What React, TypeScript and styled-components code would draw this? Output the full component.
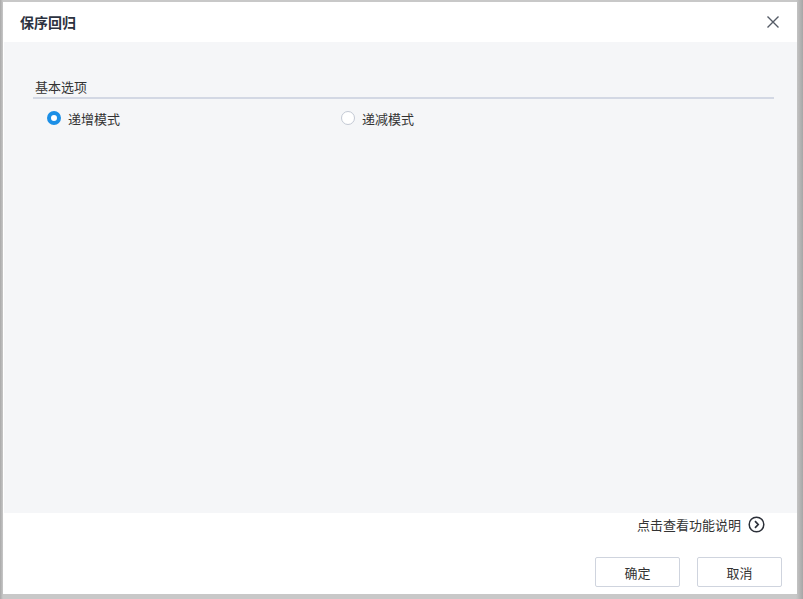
import React, { useState } from "react";
import styled, { createGlobalStyle } from "styled-components";

const GlobalStyle = createGlobalStyle`
  html, body {
    margin: 0;
    padding: 0;
    background: #b9b9b9;
  }
  body {
    font-family: "Noto Sans CJK SC", "Noto Sans", sans-serif;
  }
`;

const Page = styled.div`
  width: 803px;
  height: 599px;
  box-sizing: border-box;
  padding: 2px 6px 5px 3px;
  background: linear-gradient(90deg, #a9a9a9 0, #c8c8c8 3px, #c8c8c8 796px, #a6a6a6 803px);
`;

const Dialog = styled.div`
  width: 794px;
  height: 592px;
  background: #ffffff;
  display: flex;
  flex-direction: column;
`;

const Header = styled.div`
  height: 40px;
  display: flex;
  align-items: center;
  justify-content: space-between;
  padding: 0 17px 0 17px;
  flex-shrink: 0;
`;

const Title = styled.div`
  font-size: 14px;
  font-weight: 700;
  color: #2c3240;
`;

const CloseButton = styled.button`
  border: none;
  background: none;
  padding: 0;
  width: 14px;
  height: 14px;
  display: flex;
  cursor: pointer;
`;

const Body = styled.div`
  flex: 1;
  background: #f5f6f8;
  padding: 37px 23px 0 29px;
  margin-left: 1px;
`;

const SectionTitle = styled.div`
  font-size: 13px;
  color: #333;
  line-height: 16px;
  padding: 0 2px 2px;
  border-bottom: 2px solid #d3d8e4;
`;

const RadioRow = styled.div`
  display: flex;
  padding: 9px 0 0 14px;
`;

const RadioLabel = styled.label<{ $width?: number }>`
  display: flex;
  align-items: center;
  gap: 7px;
  width: ${(p) => (p.$width ? p.$width + "px" : "auto")};
  font-size: 13px;
  color: #333;
  height: 20px;
  cursor: pointer;
`;

const RadioDot = styled.span<{ $checked: boolean }>`
  width: 14px;
  height: 14px;
  border-radius: 50%;
  box-sizing: border-box;
  background: #fff;
  border: ${(p) => (p.$checked ? "4px solid #1c8fe6" : "1px solid #c3c9d4")};
`;

const Footer = styled.div`
  height: 81px;
  flex-shrink: 0;
  display: flex;
  flex-direction: column;
  align-items: flex-end;
  padding-right: 15px;
`;

const HelpLink = styled.a`
  display: flex;
  align-items: center;
  gap: 7px;
  margin-top: 2px;
  margin-right: 17px;
  font-size: 13px;
  color: #333;
  text-decoration: none;
  cursor: pointer;
`;

const Buttons = styled.div`
  display: flex;
  gap: 17px;
  margin-top: 23px;
`;

const Button = styled.button`
  width: 85px;
  height: 30px;
  background: #fff;
  border: 1px solid #cfd4de;
  border-radius: 2px;
  font-family: inherit;
  font-size: 13px;
  color: #333;
  cursor: pointer;
`;

export default function App() {
  const [mode, setMode] = useState("inc");
  return (
    <>
      <GlobalStyle />
      <Page>
        <Dialog>
          <Header>
            <Title>保序回归</Title>
            <CloseButton aria-label="关闭">
              <svg width="14" height="14" viewBox="0 0 14 14">
                <path d="M1.5 1.5 L12.5 12.5 M12.5 1.5 L1.5 12.5" stroke="#555b66" strokeWidth="1.4" />
              </svg>
            </CloseButton>
          </Header>
          <Body>
            <SectionTitle>基本选项</SectionTitle>
            <RadioRow>
              <RadioLabel $width={294} onClick={() => setMode("inc")}>
                <RadioDot $checked={mode === "inc"} />
                递增模式
              </RadioLabel>
              <RadioLabel onClick={() => setMode("dec")}>
                <RadioDot $checked={mode === "dec"} />
                递减模式
              </RadioLabel>
            </RadioRow>
          </Body>
          <Footer>
            <HelpLink>
              点击查看功能说明
              <svg width="17" height="17" viewBox="0 0 17 17">
                <circle cx="8.5" cy="8.5" r="7.3" fill="none" stroke="#2b2f38" strokeWidth="1.5" />
                <path d="M7 5.2 L10.2 8.5 L7 11.8" fill="none" stroke="#2b2f38" strokeWidth="1.7" />
              </svg>
            </HelpLink>
            <Buttons>
              <Button>确定</Button>
              <Button>取消</Button>
            </Buttons>
          </Footer>
        </Dialog>
      </Page>
    </>
  );
}
